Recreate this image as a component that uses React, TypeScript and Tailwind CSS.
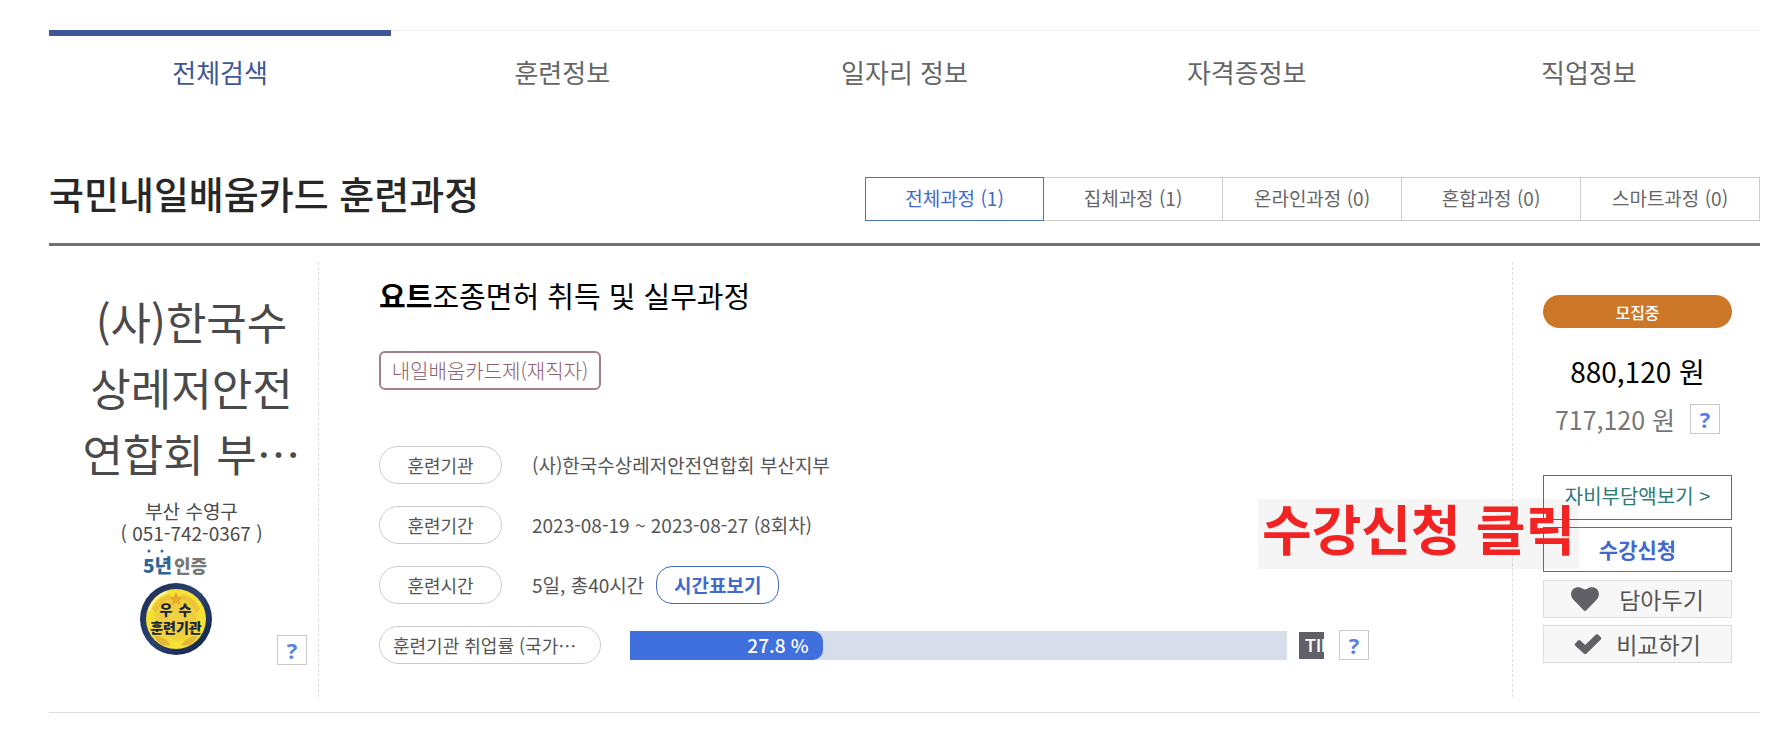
import type { ReactNode } from 'react';
import { clsx } from 'clsx';

const tabs = ['전체검색', '훈련정보', '일자리 정보', '자격증정보', '직업정보'];

const filters = [
    { label: '전체과정', count: 1 },
    { label: '집체과정', count: 1 },
    { label: '온라인과정', count: 0 },
    { label: '혼합과정', count: 0 },
    { label: '스마트과정', count: 0 },
];

const employmentRate = 27.8;

export default function App() {
    return (
        <div
            lang="ko"
            className="relative min-h-screen bg-white pl-[49px] pr-4 pt-[30px] pb-4 font-['Noto_Sans_CJK_KR',sans-serif] text-[#555]"
        >
            <SearchTabs />
            <main>
                <header className="flex items-start justify-between border-b-[3px] border-[#717171] pt-[55px] pb-[22px]">
                    <h1 className="text-[38px] leading-[44px] font-medium text-[#272727]">국민내일배움카드 훈련과정</h1>
                    <CourseFilters />
                </header>
                <article className="flex border-b border-[#ddd] pt-4 pb-[15px]">
                    <Institution />
                    <CourseInfo />
                    <Enrollment />
                </article>
            </main>
        </div>
    );
}

function SearchTabs() {
    return (
        <nav className="grid grid-cols-5">
            {tabs.map((tab, i) => (
                <a
                    key={tab}
                    href="#"
                    className={clsx(
                        'h-[86px] text-center text-[26px] leading-[38px]',
                        i === 0
                            ? 'border-t-[6px] border-[#3f5797] pt-[17px] text-[#3f5797]'
                            : 'border-t border-[#f0f0f0] pt-[22px] text-[#666]',
                    )}
                >
                    {tab}
                </a>
            ))}
        </nav>
    );
}

function CourseFilters() {
    return (
        <div className="mt-[6px] grid w-[895px] grid-cols-5">
            {filters.map((filter, i) => (
                <button
                    key={filter.label}
                    type="button"
                    className={clsx(
                        'h-11 border pb-[2px] text-[19px] leading-[30px]',
                        i === 0 ? 'z-10 border-[#4a72b8] text-[#4169cf]' : '-ml-px border-[#ccc] text-[#666]',
                    )}
                >
                    {filter.label} ({filter.count})
                </button>
            ))}
        </div>
    );
}

function Institution() {
    return (
        <section className="flex w-[270px] shrink-0 flex-col border-r border-dashed border-[#ddd] pt-[26px] pb-8">
            <div className="pl-4 text-center">
                <h2 className="text-[44px] leading-[66px] text-[#4a4a4a]">
                    (사)한국수
                    <br />
                    상레저안전
                    <br />
                    연합회 부…
                </h2>
                <p className="pt-[14px] text-[19px] leading-[22px] text-[#4a4a4a]">
                    부산 수영구
                    <br />( 051-742-0367 )
                </p>
            </div>
            <div className="flex items-end justify-between pl-[91px] pr-[11px] pt-[5px]">
                <CertifiedBadge />
                <HelpButton label="우수훈련기관 도움말" />
            </div>
        </section>
    );
}

function CertifiedBadge() {
    return (
        <svg width="72" height="116" viewBox="0 0 72 116" role="img" aria-label="5년 인증 우수 훈련기관">
            <defs>
                <radialGradient id="gold" cx="50%" cy="50%" r="50%">
                    <stop offset="0" stopColor="#f3d048" />
                    <stop offset="0.6" stopColor="#f0cd3c" />
                    <stop offset="0.85" stopColor="#f7e42f" />
                    <stop offset="1" stopColor="#f5e23c" />
                </radialGradient>
                <linearGradient id="navy" x1="0" y1="0" x2="1" y2="1">
                    <stop offset="0" stopColor="#1b2c55" />
                    <stop offset="0.5" stopColor="#2c4270" />
                    <stop offset="1" stopColor="#101f45" />
                </linearGradient>
            </defs>
            <circle cx="9" cy="2" r="1.5" fill="#2f6a9e" />
            <circle cx="22" cy="2" r="1.5" fill="#2f6a9e" />
            <text x="3" y="24" fontSize="19" fontWeight="900" fill="#2f6595">5년</text>
            <text x="34" y="24" fontSize="18" fontWeight="900" fill="#777">인증</text>
            <circle cx="36" cy="70" r="36" fill="url(#navy)" />
            <circle cx="36" cy="70" r="30" fill="url(#gold)" />
            <path d="M9 62 A28 28 0 0 1 27 43" fill="none" stroke="#fdf6c8" strokeWidth="2" opacity="0.8" />
            <path d="M12 60 A26 26 0 0 1 30 45 L31 50 A21 21 0 0 0 16 64 Z M60 60 A26 26 0 0 0 42 45 L41 50 A21 21 0 0 1 56 64 Z" fill="#e3a944" opacity="0.5" />
            <path d="M14 86 C20 87 27 90 31 96 C23 98 17 94 14 86 Z M58 86 C52 87 45 90 41 96 C49 98 55 94 58 86 Z" fill="#dca23c" opacity="0.7" />
            <path d="M36 43 L38.2 47.6 L43 48.2 L39.4 51.5 L40.4 56 L36 53.8 L31.6 56 L32.6 51.5 L29 48.2 L33.8 47.6 Z" fill="#e8ab32" />
            <text x="26" y="66" fontSize="14" fontWeight="900" textAnchor="middle" fill="#14253f">우</text>
            <text x="45" y="66" fontSize="14" fontWeight="900" textAnchor="middle" fill="#14253f">수</text>
            <text x="36" y="84" fontSize="14" fontWeight="900" textAnchor="middle" fill="#14253f">훈련기관</text>
        </svg>
    );
}

function HelpButton({ label }: { label: string }) {
    return (
        <button
            type="button"
            aria-label={label}
            className="flex size-[30px] shrink-0 items-center justify-center border border-[#c8c8c8] bg-white font-['Open_Sans',sans-serif] text-[22px] leading-none font-bold text-[#5b82e0]"
        >
            ?
        </button>
    );
}

function CourseInfo() {
    return (
        <section className="min-w-0 flex-1 pl-[60px] pr-[143px] pt-3">
            <h2 className="text-[29px] leading-[42px] text-black">
                <strong className="font-bold">요트</strong>조종면허 취득 및 실무과정
            </h2>
            <p className="mt-[35px] flex h-[39px] w-[222px] items-center justify-center rounded-md border-2 border-[#a57f8c] text-[20px] leading-none font-light text-[#8d6070]">
                내일배움카드제(재직자)
            </p>
            <dl className="mt-14 flex flex-col gap-[22px]">
                <InfoRow label="훈련기관">(사)한국수상레저안전연합회 부산지부</InfoRow>
                <InfoRow label="훈련기간">2023-08-19 ~ 2023-08-27 (8회차)</InfoRow>
                <InfoRow label="훈련시간">
                    5일, 총40시간
                    <button type="button" className="h-[38px] w-[123px] rounded-2xl border border-[#4169cf] font-bold text-[#4169cf]">
                        시간표보기
                    </button>
                </InfoRow>
                <div className="flex h-[38px] items-center">
                    <dt className="flex h-full w-[222px] shrink-0 items-center rounded-full border border-[#ccc] px-[13px] text-[18px] whitespace-nowrap">
                        훈련기관 취업률 (국가…
                    </dt>
                    <dd className="flex flex-1 items-center pl-[29px]">
                        <div className="h-[29px] flex-1 bg-[#d8dee9]">
                            <div
                                className="flex h-full items-center justify-end rounded-r-[10px] bg-[#4070dd] pr-[14px] text-[19px] font-medium text-white"
                                style={{ width: `calc(${employmentRate}% + 10px)` }}
                            >
                                {employmentRate} %
                            </div>
                        </div>
                        <span className="mr-[15px] ml-3 flex h-[27px] w-[25px] items-center overflow-hidden bg-[#606066] pl-[6px] font-['Roboto',sans-serif] text-[18px] font-medium text-white">
                            TIP
                        </span>
                        <HelpButton label="취업률 도움말" />
                    </dd>
                </div>
            </dl>
        </section>
    );
}

function InfoRow({ label, children }: { label: string; children: ReactNode }) {
    return (
        <div className="flex h-[38px] items-center">
            <dt className="flex h-full w-[123px] shrink-0 items-center justify-center rounded-full border border-[#ccc] text-[18px]">
                {label}
            </dt>
            <dd className="flex items-center gap-3 pl-[30px] text-[19px] leading-[30px]">{children}</dd>
        </div>
    );
}

function Enrollment() {
    return (
        <section className="relative flex w-[248px] shrink-0 flex-col border-l border-dashed border-[#ddd] pl-[30px] pr-7 pt-[33px]">
            <p className="flex h-[33px] items-center justify-center rounded-full bg-[#cc7727] text-[16px] font-medium text-white">모집중</p>
            <p className="mt-[22px] text-center text-[28px] leading-[42px] text-black">880,120 원</p>
            <div className="mt-[9px] flex items-center justify-center gap-[15px]">
                <span className="text-[25px] leading-[36px] text-[#777]">717,120 원</span>
                <HelpButton label="자비부담액 도움말" />
            </div>
            <div className="mt-[38px] flex flex-col gap-[7px]">
                <button type="button" className="h-[45px] border border-[#3a7d78] pb-1 text-[20px] text-[#2f7a74]">
                    자비부담액보기 &gt;
                </button>
                <button type="button" className="h-[45px] border border-[#4a72b0] text-[21px] font-bold text-[#4169cf]">
                    수강신청
                </button>
                <button type="button" className="mt-px flex h-[38px] items-center justify-center gap-5 border border-[#dadde2] bg-[#f7f7f7] text-[23px] leading-none">
                    <svg width="28" height="24" viewBox="0 0 28 24" fill="#606066" aria-hidden="true">
                        <path d="M12.6 23.2 L2.2 12.4 C-0.6 9.4 -0.6 4.8 2 2.2 C4.8 -0.4 9.2 -0.4 12 1.8 Q14 3.2 16 1.8 C18.8 -0.4 23.2 -0.4 26 2.2 C28.6 4.8 28.6 9.4 25.8 12.4 L15.4 23.2 Q14 24.6 12.6 23.2 Z" />
                    </svg>
                    담아두기
                </button>
                <button type="button" className="flex h-[38px] items-center justify-center gap-[14px] border border-[#dadde2] bg-[#f7f7f7] text-[23px] leading-none">
                    <svg width="28" height="22" viewBox="0 0 28 22" fill="#606066" aria-hidden="true">
                        <path d="M1.2 10.4 L4 7.6 Q5.2 6.6 6.4 7.6 L11.2 12 L21.6 1.8 Q23 0.6 24.4 1.8 L26.8 4.2 Q28 5.4 26.8 6.6 L12.6 20.4 Q11.2 21.6 9.8 20.4 L1.2 12.8 Q0 11.6 1.2 10.4 Z" />
                    </svg>
                    비교하기
                </button>
            </div>
            <p className="pointer-events-none absolute -left-[255px] top-[237px] h-[70px] bg-black/4 px-1 text-[54px] leading-[58px] font-bold whitespace-nowrap text-[#f22323]">
                수강신청 클릭
            </p>
        </section>
    );
}
